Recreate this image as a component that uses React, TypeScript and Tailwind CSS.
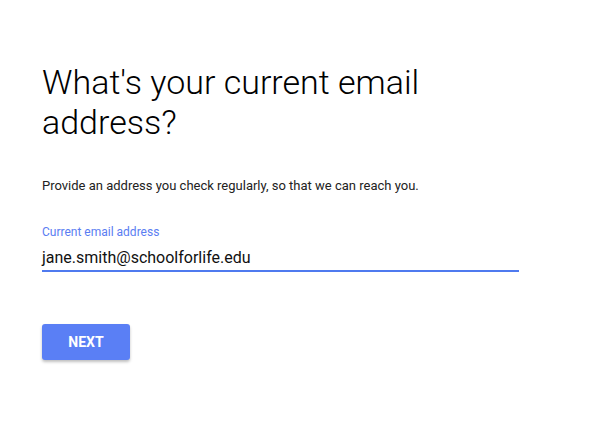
import React from 'react';

const App: React.FC = () => {
  return (
    <div className="min-h-screen w-full bg-white font-['Roboto',sans-serif]">
      <div className="pl-[42px] pt-[62px] w-[519px]">
        <h1 className="text-[34px] leading-[40px] font-light text-black">
          What's your current email address?
        </h1>
        <p className="mt-[35px] text-[13px] leading-[18px] text-[#222]">
          Provide an address you check regularly, so that we can reach you.
        </p>

        {/* Email field */}
        <div className="mt-[29px]">
          <label className="block text-[12px] leading-[16px] text-[#5a7df2]">
            Current email address
          </label>
          <div className="mt-[6px] border-b-2 border-[#4f7aef]">
            <span className="text-[16px] leading-[24px] text-[#111]">jane.smith@schoolforlife.edu</span>
          </div>
        </div>

        <button className="mt-[52px] w-[88px] h-[36px] rounded-[3px] bg-[#5a7ff5] text-white text-[14px] font-bold shadow-[0_2px_3px_rgba(0,0,0,0.25)]">
          NEXT
        </button>
      </div>
    </div>
  );
};

export default App;
